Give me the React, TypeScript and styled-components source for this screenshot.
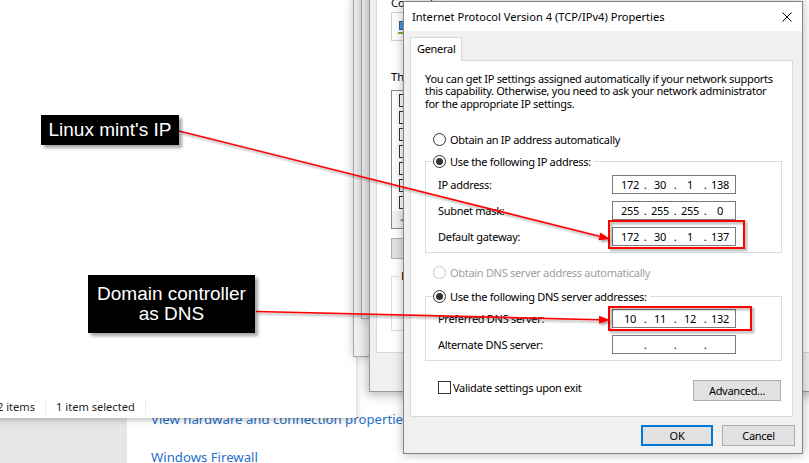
import React from 'react'
import styled, {createGlobalStyle} from 'styled-components'

const GlobalStyle = createGlobalStyle`
  *, *::before, *::after { box-sizing: border-box; }
  html, body { margin: 0; padding: 0; }
  body {
    font-family: 'Noto Sans', 'Liberation Sans', sans-serif;
    font-size: 11.1px;
    color: #000;
    overflow: hidden;
  }
`

const Desktop = styled.div`
  position: relative;
  width: 809px;
  height: 463px;
  overflow: hidden;
  background: #fff;
`

/* ---------- control panel behind everything ---------- */

const ControlPanel = styled.div`
  position: absolute;
  inset: 0;
  display: grid;
  grid-template-columns: 127px 1fr;
  background: #fff;
`

const NavPane = styled.div`
  background: #e6e6e6;
`

const TaskArea = styled.div`
  display: flex;
  flex-direction: column;
  gap: 18px;
  padding: 409px 0 0 24px;
`

const TaskLink = styled.a`
  font-size: 13.2px;
  line-height: 20px;
  color: #1e6fc8;
  white-space: nowrap;
  text-decoration: none;
`

/* ---------- explorer window ---------- */

const Explorer = styled.div`
  position: absolute;
  left: -20px;
  top: -10px;
  width: 376px;
  height: 428px;
  background: #fff;
  box-shadow: 0 2px 6px rgba(0, 0, 0, 0.25);
  display: flex;
  flex-direction: column;
  justify-content: flex-end;
`

const StatusBar = styled.div`
  height: 22px;
  display: flex;
  align-items: center;
  padding-left: 17px;
  color: #1e1e1e;
`

const StatusItem = styled.span`
  line-height: 16px;
  padding-right: 10px;
  margin-right: 10px;
  border-right: 1px solid #ececec;
`

/* ---------- stacked property windows ---------- */

const BackWindow = styled.div<{$left: number; $bottom: number}>`
  position: absolute;
  left: ${(p) => p.$left}px;
  top: -10px;
  width: 480px;
  height: ${(p) => p.$bottom + 10}px;
  background: #f0f0f0;
  border: 1px solid #a6a6a6;
  box-shadow: 0 0 10px rgba(0, 0, 0, 0.22);
`

const PropsWindow = styled.div`
  position: absolute;
  left: 369px;
  top: -20px;
  width: 460px;
  height: 412px;
  background: #f0f0f0;
  border: 1px solid #9a9a9a;
  box-shadow: -2px 3px 10px rgba(0, 0, 0, 0.28);
  padding: 6px 6px 38px 6px;
`

const PropsPane = styled.div`
  height: 100%;
  background: #fff;
  border: 1px solid #d9d9d9;
  padding: 7px 0 0 14px;
  display: flex;
  flex-direction: column;
  align-items: flex-start;
  white-space: nowrap;
`

const PaneLabel = styled.div<{$gap?: number}>`
  line-height: 16px;
  margin-top: ${(p) => p.$gap ?? 0}px;
`

const AdapterBox = styled.div`
  margin-top: 1px;
  width: 300px;
  height: 29px;
  border: 1px solid #cfcfcf;
  background: #fff;
  display: flex;
  align-items: center;
  padding-left: 6px;
`

const ItemList = styled.div`
  margin-top: 5px;
  width: 300px;
  height: 139px;
  border: 1px solid #828790;
  background: #fff;
  display: flex;
  flex-direction: column;
  padding-top: 1px;
`

const ItemRow = styled.div`
  height: 17px;
  display: flex;
  align-items: center;
  padding-left: 7px;
`

const HScroll = styled.div`
  margin-top: auto;
  height: 17px;
  background: #f0f0f0;
  display: flex;
  align-items: center;
  padding-left: 8px;
  color: #606060;
  font-size: 11px;
`

const PaneButton = styled.div`
  margin-top: 9px;
  width: 75px;
  height: 21px;
  background: #e1e1e1;
  border: 1px solid #adadad;
`

const DescGroup = styled.fieldset`
  margin: 10px 0 0 0;
  padding: 0;
  width: 300px;
  height: 62px;
  border: 1px solid #dcdcdc;
  min-inline-size: 0;

  legend {
    margin-left: 7px;
    padding: 0 2px;
    line-height: 14px;
  }
`

/* ---------- TCP/IPv4 dialog ---------- */

const Dialog = styled.div`
  position: absolute;
  left: 403px;
  top: 1px;
  width: 400px;
  height: 453px;
  background: #f0f0f0;
  border: 1px solid #868686;
  box-shadow: 0 0 10px rgba(0, 0, 0, 0.3);
  display: flex;
  flex-direction: column;
`

const TitleBar = styled.div`
  height: 29px;
  flex: none;
  background: #fff;
  display: flex;
  align-items: center;
  justify-content: space-between;
  padding: 0 10px 0 8px;
`

const DialogBody = styled.div`
  flex: 1;
  display: flex;
  flex-direction: column;
  padding: 6px 9px 7px 6px;
  font-size: 11px;
  letter-spacing: -0.3px;
`

const TabStrip = styled.div`
  display: flex;
  height: 23px;
`

const Tab = styled.div`
  position: relative;
  z-index: 1;
  width: 52px;
  height: 24px;
  background: #fff;
  border: 1px solid #d9d9d9;
  border-bottom: none;
  padding-left: 6px;
  line-height: 22px;
`

const Panel = styled.div`
  height: 357px;
  flex: none;
  background: #fff;
  border: 1px solid #d9d9d9;
  display: flex;
  flex-direction: column;
  align-items: stretch;
  white-space: nowrap;
`

const Intro = styled.p`
  margin: 0;
  padding: 12px 0 0 14px;
  line-height: 12.4px;
`

const RadioRow = styled.label<{$gap: number; $disabled?: boolean}>`
  display: flex;
  align-items: center;
  gap: 4px;
  height: 16px;
  margin: ${(p) => p.$gap}px 0 0 22px;
  color: ${(p) => (p.$disabled ? '#a0a0a0' : '#000')};
`

const Radio = styled.span<{$checked?: boolean; $disabled?: boolean}>`
  position: relative;
  flex: none;
  width: 13px;
  height: 13px;
  border-radius: 50%;
  border: 1px solid ${(p) => (p.$disabled ? '#c8c8c8' : '#333')};
  background: #fff;

  &::after {
    content: '';
    position: absolute;
    inset: 2px;
    border-radius: 50%;
    background: #333;
    display: ${(p) => (p.$checked ? 'block' : 'none')};
  }
`

const GroupBox = styled.fieldset<{$gap: number}>`
  margin: ${(p) => p.$gap}px 10px 0 14px;
  padding: 0 0 6px 0;
  border: 1px solid #dcdcdc;
  min-inline-size: 0;
`

const GroupLegend = styled.legend`
  margin-left: 7px;
  padding: 0 3px 0 0;
  height: 16px;
  display: flex;
  align-items: center;
  gap: 4px;
`

const FieldGrid = styled.div<{$top: number}>`
  display: grid;
  grid-template-columns: 174px 124px;
  grid-auto-rows: 19px;
  row-gap: 7px;
  padding: ${(p) => p.$top}px 0 0 12px;
`

const FieldLabel = styled.span`
  align-self: center;
  line-height: 16px;
`

const IpBox = styled.div`
  display: flex;
  align-items: center;
  height: 19px;
  border: 1px solid #7a7a7a;
  background: #fff;
  padding-left: 5px;
`

const Octet = styled.span`
  width: 24px;
  text-align: center;
`

const Dot = styled.span`
  width: 6px;
  text-align: center;
`

const BottomRow = styled.div`
  display: flex;
  justify-content: space-between;
  align-items: flex-start;
  margin: 19px 11px 0 27px;
`

const CheckRow = styled.label`
  display: flex;
  align-items: center;
  gap: 2px;
  margin-top: 1px;
  line-height: 13px;
`

const CheckBox = styled.span`
  flex: none;
  width: 13px;
  height: 13px;
  border: 1px solid #333;
  background: #fff;
  display: flex;
  align-items: center;
  justify-content: center;
  font-size: 10px;
  line-height: 1;
`

const WinButton = styled.button<{$width: number; $default?: boolean}>`
  width: ${(p) => p.$width}px;
  height: 21px;
  padding: 0;
  font: inherit;
  letter-spacing: inherit;
  color: #000;
  background: #e1e1e1;
  border: ${(p) => (p.$default ? '2px solid #0078d7' : '1px solid #adadad')};
`

const Footer = styled.div`
  display: flex;
  justify-content: flex-end;
  gap: 9px;
  margin: 8px -2px 0 0;
`

/* ---------- annotations ---------- */

const Overlay = styled.svg`
  position: absolute;
  inset: 0;
  pointer-events: none;
`

const Callout = styled.div<{$x: number; $y: number; $w: number; $h: number}>`
  position: absolute;
  left: ${(p) => p.$x}px;
  top: ${(p) => p.$y}px;
  width: ${(p) => p.$w}px;
  height: ${(p) => p.$h}px;
  background: #000;
  color: #fff;
  font-family: 'Liberation Sans', Arial, sans-serif;
  font-size: 19px;
  line-height: 20px;
  text-align: center;
  display: flex;
  align-items: center;
  justify-content: center;
  box-shadow: 3px 3px 3px rgba(0, 0, 0, 0.35);
`

type Pt = [number, number]

const Arrow = ({from, to}: {from: Pt; to: Pt}) => {
  const dx = to[0] - from[0]
  const dy = to[1] - from[1]
  const len = Math.hypot(dx, dy)
  const ux = dx / len
  const uy = dy / len
  const bx = to[0] - ux * 11
  const by = to[1] - uy * 11
  const head = [
    [to[0], to[1]],
    [bx - uy * 4, by + ux * 4],
    [bx + uy * 4, by - ux * 4],
  ]
    .map((p) => p.join(','))
    .join(' ')
  return (
    <g filter='url(#shade)'>
      <line x1={from[0]} y1={from[1]} x2={bx} y2={by} stroke='#ff0000' strokeWidth={1.6} />
      <polygon points={head} fill='#ff0000' />
    </g>
  )
}

const IpField = ({octets}: {octets: string[]}) => (
  <IpBox>
    {octets.map((o, i) => (
      <React.Fragment key={i}>
        {i > 0 && <Dot>.</Dot>}
        <Octet>{o}</Octet>
      </React.Fragment>
    ))}
  </IpBox>
)

const AdapterIcon = () => (
  <svg width='16' height='16' viewBox='0 0 16 16'>
    <rect x='1.5' y='2.5' width='11' height='8' fill='#4a9be0' stroke='#2a5f94' />
    <rect x='5' y='11' width='4' height='1.5' fill='#777' />
    <rect x='0' y='13' width='9' height='2' fill='#6fb33c' />
  </svg>
)

const CloseIcon = () => (
  <svg width='10' height='10' viewBox='0 0 10 10'>
    <path d='M0.5 0.5 L9.5 9.5 M9.5 0.5 L0.5 9.5' stroke='#000' strokeWidth='1' />
  </svg>
)

const items = [true, true, true, true, false, true, true]

const ipRows = [
  {label: 'IP address:', value: ['172', '30', '1', '138']},
  {label: 'Subnet mask:', value: ['255', '255', '255', '0']},
  {label: 'Default gateway:', value: ['172', '30', '1', '137']},
]

const dnsRows = [
  {label: 'Preferred DNS server:', value: ['10', '11', '12', '132']},
  {label: 'Alternate DNS server:', value: ['', '', '', '']},
]

export default function App() {
  return (
    <Desktop>
      <GlobalStyle />

      <ControlPanel>
        <NavPane />
        <TaskArea>
          <TaskLink>View hardware and connection properties</TaskLink>
          <TaskLink>Windows Firewall</TaskLink>
        </TaskArea>
      </ControlPanel>

      <Explorer>
        <StatusBar>
          <StatusItem>2 items</StatusItem>
          <StatusItem>1 item selected</StatusItem>
        </StatusBar>
      </Explorer>

      <BackWindow $left={353} $bottom={357} />
      <BackWindow $left={361} $bottom={319} />

      <PropsWindow>
        <PropsPane>
          <PaneLabel>Connect using:</PaneLabel>
          <AdapterBox>
            <AdapterIcon />
          </AdapterBox>
          <PaneLabel $gap={28}>This connection uses the following items:</PaneLabel>
          <ItemList>
            {items.map((on, i) => (
              <ItemRow key={i}>
                <CheckBox>{on ? '✔' : ''}</CheckBox>
              </ItemRow>
            ))}
            <HScroll>&lt;</HScroll>
          </ItemList>
          <PaneButton />
          <DescGroup>
            <legend>Description</legend>
          </DescGroup>
        </PropsPane>
      </PropsWindow>

      <Dialog>
        <TitleBar>
          <span>Internet Protocol Version 4 (TCP/IPv4) Properties</span>
          <CloseIcon />
        </TitleBar>
        <DialogBody>
          <TabStrip>
            <Tab>General</Tab>
          </TabStrip>
          <Panel>
            <Intro>
              You can get IP settings assigned automatically if your network supports
              <br />
              this capability. Otherwise, you need to ask your network administrator
              <br />
              for the appropriate IP settings.
            </Intro>

            <RadioRow $gap={21}>
              <Radio />
              Obtain an IP address automatically
            </RadioRow>
            <GroupBox $gap={6}>
              <GroupLegend>
                <Radio $checked />
                Use the following IP address:
              </GroupLegend>
              <FieldGrid $top={6}>
                {ipRows.map((r) => (
                  <React.Fragment key={r.label}>
                    <FieldLabel>{r.label}</FieldLabel>
                    <IpField octets={r.value} />
                  </React.Fragment>
                ))}
              </FieldGrid>
            </GroupBox>

            <RadioRow $gap={11} $disabled>
              <Radio $disabled />
              Obtain DNS server address automatically
            </RadioRow>
            <GroupBox $gap={8}>
              <GroupLegend>
                <Radio $checked />
                Use the following DNS server addresses:
              </GroupLegend>
              <FieldGrid $top={5}>
                {dnsRows.map((r) => (
                  <React.Fragment key={r.label}>
                    <FieldLabel>{r.label}</FieldLabel>
                    <IpField octets={r.value} />
                  </React.Fragment>
                ))}
              </FieldGrid>
            </GroupBox>

            <BottomRow>
              <CheckRow>
                <CheckBox />
                Validate settings upon exit
              </CheckRow>
              <WinButton $width={88}>Advanced...</WinButton>
            </BottomRow>
          </Panel>
          <Footer>
            <WinButton $width={72} $default>
              OK
            </WinButton>
            <WinButton $width={73}>Cancel</WinButton>
          </Footer>
        </DialogBody>
      </Dialog>

      <Overlay width='809' height='463' viewBox='0 0 809 463'>
        <defs>
          <filter id='shade' x='-10%' y='-10%' width='120%' height='130%'>
            <feDropShadow dx='2' dy='2' stdDeviation='1.2' floodColor='#000' floodOpacity='0.35' />
          </filter>
        </defs>
        <g filter='url(#shade)' fill='none' stroke='#ff0000' strokeWidth={2}>
          <rect x={609} y={221} width={135} height={27} />
          <rect x={609} y={307} width={142} height={23} />
        </g>
        <Arrow from={[179, 131]} to={[610, 239]} />
        <Arrow from={[256, 311.5]} to={[610, 320]} />
      </Overlay>

      <Callout $x={41} $y={115} $w={138} $h={30}>
        Linux mint's IP
      </Callout>
      <Callout $x={88} $y={275} $w={167} $h={58}>
        Domain controller
        <br />
        as DNS
      </Callout>
    </Desktop>
  )
}
